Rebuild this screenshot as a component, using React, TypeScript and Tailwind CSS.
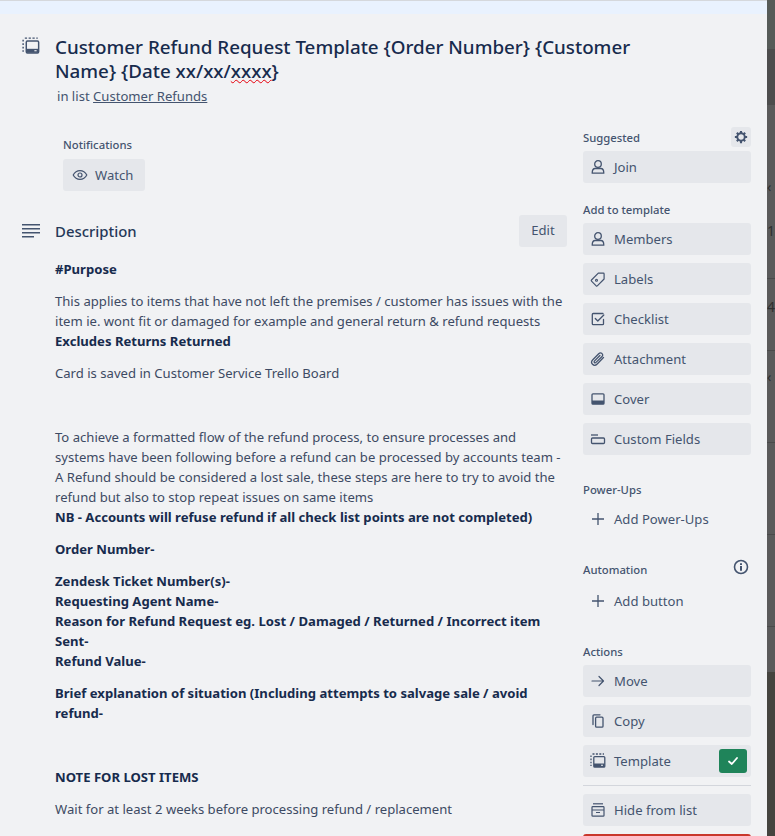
import React from "react";

const stroke = {
    fill: "none",
    stroke: "currentColor",
    strokeWidth: 1.5,
    strokeLinecap: "round" as const,
    strokeLinejoin: "round" as const,
};

const Svg = ({ size = 16, children }: { size?: number; children: React.ReactNode }) => (
    <svg width={size} height={size} viewBox="0 0 16 16" className="shrink-0">
        {children}
    </svg>
);

const TemplateIcon = ({ size = 16 }: { size?: number }) => (
    <Svg size={size}>
        <path d="M1 2.500v10.500" {...stroke} strokeWidth={1.300} strokeDasharray="1.600 1.500" strokeLinecap="butt" />
        <path d="M2.500 1h11.500" {...stroke} strokeWidth={1.300} strokeDasharray="2 1.400" strokeLinecap="butt" />
        <rect x="3.800" y="3.600" width="11" height="10.600" rx="1" {...stroke} strokeWidth={1.300} />
        <path d="M4 10.500h10.600v3.500H4z" fill="currentColor" />
        <path d="M11 11.700h2v1h-2z" fill="#f1f2f4" />
    </Svg>
);

const MemberIcon = () => (
    <Svg>
        <circle cx="8" cy="5" r="3.300" {...stroke} strokeWidth={1.300} />
        <path d="M2.200 14.200c0-3.200 1.600-4.700 3-4.700h5.600c1.400 0 3 1.500 3 4.700z" {...stroke} strokeWidth={1.300} />
    </Svg>
);

const LabelIcon = () => (
    <Svg>
        <path d="M1.500 9 8.300 2.200h5.100c.4 0 .7.3.7.7v5.100L7.300 14.800c-.4.400-.8.400-1.100 0L1.500 10.100c-.3-.3-.3-.8 0-1.100z" {...stroke} strokeWidth={1.200} />
        <circle cx="6.500" cy="9.300" r="1" {...stroke} strokeWidth={1.100} />
    </Svg>
);

const ChecklistIcon = () => (
    <Svg>
        <path d="M13.500 8.500v4.200c0 .6-.4 1-1 1H3.300c-.6 0-1-.4-1-1V3.500c0-.6.4-1 1-1h9.700" {...stroke} strokeWidth={1.300} />
        <path d="m5.300 7.500 2.500 2.500 6-6" {...stroke} strokeWidth={1.300} />
    </Svg>
);

const AttachmentIcon = () => (
    <Svg>
        <path
            d="M13.500 6.500 7.200 13c-1.500 1.500-3.500 1.500-4.700.3-1.200-1.200-1.100-3.100.3-4.500l5.900-6c1-1 2.400-1 3.300-.2.900.9.800 2.200-.2 3.200L6 11.400c-.5.500-1.200.5-1.600.1-.4-.4-.3-1.100.2-1.600l5.300-5.400"
            {...stroke}
            strokeWidth={1.300}
        />
    </Svg>
);

const CoverIcon = () => (
    <Svg>
        <rect x="2" y="2.800" width="12" height="10.400" rx="1" {...stroke} strokeWidth={1.300} />
        <path d="M2 9.500h12v3.600H2z" fill="currentColor" />
    </Svg>
);

const FieldsIcon = () => (
    <Svg>
        <path d="M1 4h7" {...stroke} strokeWidth={1.300} strokeLinecap="butt" />
        <rect x="1.500" y="7" width="13" height="5.500" rx="1" {...stroke} strokeWidth={1.300} />
    </Svg>
);

const PlusIcon = () => (
    <Svg>
        <path d="M8 2v12M2 8h12" {...stroke} strokeWidth={1.300} strokeLinecap="butt" />
    </Svg>
);

const ArrowIcon = () => (
    <Svg>
        <path d="M2 8h11.500M9 3.500 13.500 8 9 12.500" {...stroke} strokeWidth={1.200} />
    </Svg>
);

const CopyIcon = () => (
    <Svg>
        <path d="M3 11.500V2.800c0-.6.400-1 1-1h6" {...stroke} strokeWidth={1.300} />
        <rect x="5.600" y="4.200" width="7.400" height="10" rx="1" {...stroke} strokeWidth={1.300} />
    </Svg>
);

const ArchiveIcon = () => (
    <Svg>
        <path d="M3 1.800h10" {...stroke} strokeWidth={1.200} strokeLinecap="butt" />
        <rect x="2" y="4.600" width="12" height="9.600" rx=".8" {...stroke} strokeWidth={1.200} />
        <path d="M2 8h12M6 10.500h4" {...stroke} strokeWidth={1.200} strokeLinecap="butt" />
    </Svg>
);

const EyeIcon = () => (
    <svg width="16" height="16" viewBox="0 0 16 16" className="shrink-0">
        <path d="M1.200 8C2.800 5 5.200 3.600 8 3.600s5.200 1.400 6.800 4.400c-1.600 3-4 4.400-6.800 4.400S2.800 11 1.200 8z" {...stroke} strokeWidth={1.200} />
        <circle cx="8" cy="8" r="2" {...stroke} strokeWidth={1.200} />
    </svg>
);

const GearIcon = () => (
    <svg width="14" height="14" viewBox="0 0 16 16">
        <circle cx="8" cy="8" r="4.300" fill="none" stroke="currentColor" strokeWidth="2.200" />
        <path
            d="M6.800 1h2.400v2.500H6.800zM6.800 12.500h2.400V15H6.800zM1 6.800h2.500v2.400H1zM12.500 6.800H15v2.400h-2.500zM2.400 4.100l1.700-1.700 1.800 1.800-1.700 1.700zM10.100 11.800l1.700-1.700 1.800 1.800-1.700 1.700zM11.900 2.400l1.700 1.700-1.800 1.800-1.700-1.700zM4.200 10.100l1.700 1.700-1.800 1.800-1.700-1.700z"
            fill="currentColor"
        />
    </svg>
);

const SideButton = ({ icon, label, children }: { icon: React.ReactNode; label: string; children?: React.ReactNode }) => (
    <div className="flex h-8 items-center rounded-[3px] bg-[#e5e7eb] pl-[7px] pr-1 text-[13.1px] text-[#44546f]">
        <span className="mr-[8px] flex w-4 justify-center">{icon}</span>
        <span className="pt-[2px]">{label}</span>
        {children}
    </div>
);

const GhostRow = ({ label }: { label: string }) => (
    <div className="flex h-8 items-center pl-[7px] text-[13.1px] text-[#44546f]">
        <span className="mr-[8px] flex w-4 justify-center">
            <PlusIcon />
        </span>
        <span className="pt-[2px]">{label}</span>
    </div>
);

const SideLabel = ({ children }: { children: React.ReactNode }) => (
    <div className="flex h-[13px] items-center text-[11.3px] font-medium text-[#44546f]">{children}</div>
);

const Bold = ({ children }: { children: React.ReactNode }) => (
    <strong className="font-bold text-[#172b4d]">{children}</strong>
);

const App = () => {
    return (
        <div className="flex h-[836px] w-[775px] overflow-hidden bg-[#f1f2f4] font-['Noto_Sans',sans-serif] text-[#172b4d]">
            <div className="flex w-[767px] shrink-0 flex-col">
                <div className="h-[14px] shrink-0 border-t border-[#d5d8dc] bg-[#e9f2fe]"></div>

                <div className="flex pl-[22px] pt-[21px]">
                    <span className="mr-[15px] mt-[2px] text-[#44546f]">
                        <TemplateIcon size={18} />
                    </span>
                    <div className="w-[600px]">
                        <h1 className="text-[18.8px] font-medium leading-6 text-[#172b4d]">
                            Customer Refund Request Template {"{"}Order Number{"}"} {"{"}Customer Name{"}"} {"{"}Date xx/xx/
                            <span className="underline decoration-red-600 decoration-wavy decoration-1">xxxx</span>
                            {"}"}
                        </h1>
                        <p className="ml-[2px] mt-[3px] text-[13.1px] leading-5 text-[#44546f]">
                            in list <span className="underline">Customer Refunds</span>
                        </p>
                    </div>
                </div>

                <div className="flex min-h-0 flex-1 pl-[22px]">
                    <div className="w-[545px] shrink-0">
                        <div className="ml-[41px] mt-[31px]">
                            <div className="flex h-[16px] items-center text-[11.3px] font-medium text-[#44546f]">Notifications</div>
                            <div className="mt-[6px] flex h-8 w-[82px] items-center rounded-[3px] bg-[#e5e7eb] pl-[9px] text-[13.1px] text-[#44546f]">
                                <span className="mr-[7px]">
                                    <EyeIcon />
                                </span>
                                <span className="pt-[2px]">Watch</span>
                            </div>
                        </div>

                        <div className="mt-[24px] flex h-8 items-center">
                            <span className="mr-[15px] text-[#44546f]">
                                <svg width="18" height="16" viewBox="0 0 18 16">
                                    <path d="M0 1h18v1.600H0zM0 5h18v1.600H0zM0 9h18v1.600H0zM0 13h12v1.600H0z" fill="currentColor" />
                                </svg>
                            </span>
                            <h2 className="flex-1 text-[14.9px] font-medium text-[#253858]">Description</h2>
                            <div className="flex h-8 w-12 items-center justify-center rounded-[3px] bg-[#e5e7eb] text-[13.1px] text-[#44546f]">
                                Edit
                            </div>
                        </div>

                        <div className="ml-[33px] mt-3 flex flex-col gap-3 text-[13.1px] leading-5 text-[#3d4a63]">
                            <p><Bold>#Purpose</Bold></p>
                            <p>
                                This applies to items that have not left the premises / customer has issues with the item ie. wont fit or damaged for example and general return &amp; refund requests
                                <br />
                                <Bold>Excludes Returns Returned</Bold>
                            </p>
                            <p>Card is saved in Customer Service Trello Board</p>
                            <p>&nbsp;</p>
                            <p>
                                To achieve a formatted flow of the refund process, to ensure processes and systems have been following before a refund can be processed by accounts team - A Refund should be considered a lost sale, these steps are here to try to avoid the refund but also to stop repeat issues on same items
                                <br />
                                <Bold>NB - Accounts will refuse refund if all check list points are not completed)</Bold>
                            </p>
                            <p><Bold>Order Number-</Bold></p>
                            <p>
                                <Bold>Zendesk Ticket Number(s)-</Bold>
                                <br />
                                <Bold>Requesting Agent Name-</Bold>
                                <br />
                                <Bold>Reason for Refund Request eg. Lost / Damaged / Returned / Incorrect item Sent-</Bold>
                                <br />
                                <Bold>Refund Value-</Bold>
                            </p>
                            <p><Bold>Brief explanation of situation (Including attempts to salvage sale / avoid refund-</Bold></p>
                            <p>&nbsp;</p>
                            <p><Bold>NOTE FOR LOST ITEMS</Bold></p>
                            <p>Wait for at least 2 weeks before processing refund / replacement</p>
                        </div>
                    </div>

                    <div className="ml-4 w-[168px] shrink-0">
                        <div className="mt-[21px] flex h-5 items-center justify-between">
                            <div className="pt-[2px]">
                                <SideLabel>Suggested</SideLabel>
                            </div>
                            <span className="flex h-5 w-5 items-center justify-center rounded-[3px] bg-[#e5e7eb] text-[#44546f]">
                                <GearIcon />
                            </span>
                        </div>
                        <div className="mt-[4px]">
                            <SideButton icon={<MemberIcon />} label="Join" />
                        </div>

                        <div className="mt-[21px]">
                            <SideLabel>Add to template</SideLabel>
                        </div>
                        <div className="mt-[6px] flex flex-col gap-2">
                            <SideButton icon={<MemberIcon />} label="Members" />
                            <SideButton icon={<LabelIcon />} label="Labels" />
                            <SideButton icon={<ChecklistIcon />} label="Checklist" />
                            <SideButton icon={<AttachmentIcon />} label="Attachment" />
                            <SideButton icon={<CoverIcon />} label="Cover" />
                            <SideButton icon={<FieldsIcon />} label="Custom Fields" />
                        </div>

                        <div className="mt-[29px]">
                            <SideLabel>Power-Ups</SideLabel>
                        </div>
                        <div className="mt-[6px]">
                            <GhostRow label="Add Power-Ups" />
                        </div>

                        <div className="mt-[22px] flex h-5 items-center justify-between">
                            <div className="pt-[6px]">
                                <SideLabel>Automation</SideLabel>
                            </div>
                            <span className="flex h-5 w-5 items-center justify-center text-[#44546f]">
                                <svg width="16" height="16" viewBox="0 0 16 16">
                                    <circle cx="8" cy="8" r="6.500" fill="none" stroke="currentColor" strokeWidth="1.600" />
                                    <path d="M7 7h2v4.800H7zM7 4.200h2v1.800H7z" fill="currentColor" />
                                </svg>
                            </span>
                        </div>
                        <div className="mt-[8px]">
                            <GhostRow label="Add button" />
                        </div>

                        <div className="mt-[29px]">
                            <SideLabel>Actions</SideLabel>
                        </div>
                        <div className="mt-[6px] flex flex-col gap-2">
                            <SideButton icon={<ArrowIcon />} label="Move" />
                            <SideButton icon={<CopyIcon />} label="Copy" />
                            <SideButton icon={<TemplateIcon />} label="Template">
                                <span className="ml-auto flex h-6 w-7 items-center justify-center rounded-[3px] bg-[#1f845a] text-white">
                                    <svg width="12" height="12" viewBox="0 0 12 12">
                                        <path d="m2 6.500 2.800 2.500L10 3" fill="none" stroke="currentColor" strokeWidth="1.800" strokeLinecap="round" strokeLinejoin="round" />
                                    </svg>
                                </span>
                            </SideButton>
                        </div>
                        <div className="mt-2 h-px bg-[#d3d6dc]"></div>
                        <div className="mt-[8px]">
                            <SideButton icon={<ArchiveIcon />} label="Hide from list" />
                        </div>
                        <div className="mt-2 h-8 rounded-[3px] bg-[#c9372c]"></div>
                    </div>
                </div>
            </div>

            <div className="flex w-2 shrink-0 flex-col overflow-hidden whitespace-nowrap bg-[#5a5a5a] text-sm leading-5 text-[#2f2f2f]">
                <div className="h-[49px] shrink-0 bg-[#565b58]"></div>
                <div className="h-[56px] shrink-0 bg-[#4d4d4d]"></div>
                <div className="h-[174px] shrink-0 border-b border-[#4a4a4a] pt-[72px]">
                    <div>‹</div>
                    <div className="mt-6">1</div>
                </div>
                <div className="h-[72px] shrink-0 border-b border-[#4a4a4a] pt-[18px]">4/</div>
                <div className="h-[92px] shrink-0 border-b border-[#4a4a4a] pt-[16px]">‹</div>
                <div className="h-[92px] shrink-0 border-b border-[#4a4a4a]"></div>
                <div className="h-[92px] shrink-0 border-b border-[#4a4a4a]"></div>
                <div className="h-[45px] shrink-0"></div>
                <div className="flex-1 bg-[#45443f]"></div>
            </div>
        </div>
    );
};

export default App;
